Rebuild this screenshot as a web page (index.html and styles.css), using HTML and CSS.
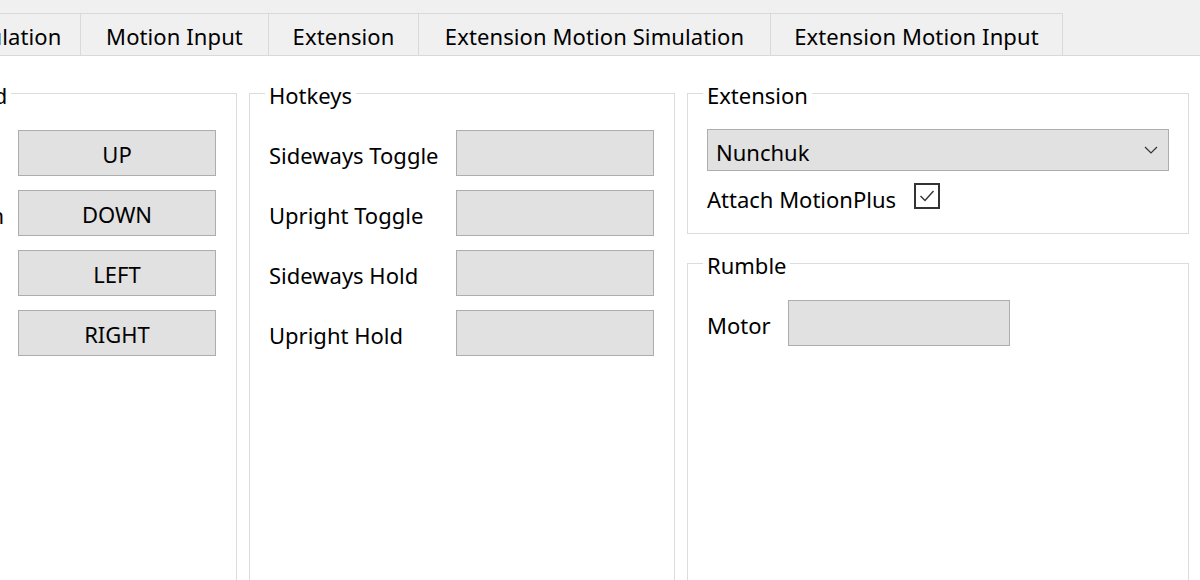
FILE: index.html
```html
<!DOCTYPE html>
<html>
<head>
<meta charset="utf-8">
<link rel="stylesheet" href="styles.css">
</head>
<body>
<div class="tabbar">
  <div class="tab t1">Motion Simulation</div>
  <div class="tab t2">Motion Input</div>
  <div class="tab t3">Extension</div>
  <div class="tab t4">Extension Motion Simulation</div>
  <div class="tab t5">Extension Motion Input</div>
</div>
<div class="content">
  <fieldset class="group g-dpad">
    <legend>D-Pad</legend>
    <div class="form form-dpad">
      <span class="label">Up</span><div class="btn">UP</div>
      <span class="label">Down</span><div class="btn">DOWN</div>
      <span class="label">Left</span><div class="btn">LEFT</div>
      <span class="label">Right</span><div class="btn">RIGHT</div>
    </div>
  </fieldset>
  <fieldset class="group g-hotkeys">
    <legend>Hotkeys</legend>
    <div class="form form-hotkeys">
      <span class="label">Sideways Toggle</span><div class="btn"></div>
      <span class="label">Upright Toggle</span><div class="btn"></div>
      <span class="label">Sideways Hold</span><div class="btn"></div>
      <span class="label">Upright Hold</span><div class="btn"></div>
    </div>
  </fieldset>
  <div class="col">
    <fieldset class="group g-ext">
      <legend>Extension</legend>
      <div class="combo">
        <span>Nunchuk</span>
        <svg class="chev" width="14" height="8" viewBox="0 0 14 8"><path d="M1 1 L7 7 L13 1" fill="none" stroke="#333" stroke-width="1.2"/></svg>
      </div>
      <div class="check-row">
        <span class="check-label">Attach MotionPlus</span>
        <span class="checkbox"><svg width="22" height="22" viewBox="0 0 22 22"><path d="M4.5 11 L9 15.5 L17.5 6" fill="none" stroke="#333" stroke-width="1.4"/></svg></span>
      </div>
    </fieldset>
    <fieldset class="group g-rumble">
      <legend>Rumble</legend>
      <div class="form form-rumble">
        <span class="label">Motor</span><div class="btn"></div>
      </div>
    </fieldset>
  </div>
</div>
</body>
</html>
```
FILE: styles.css
```css
* { box-sizing: border-box; }
html, body { margin: 0; padding: 0; }
body {
  width: 1200px;
  height: 580px;
  overflow: hidden;
  background: #ffffff;
  font-family: "Noto Sans", "Segoe UI", sans-serif;
  font-size: 22px;
  color: #000;
}
.tabbar {
  height: 56px;
  background: #f0f0f0;
  border-bottom: 1px solid #d9d9d9;
  padding-top: 13px;
  display: flex;
  align-items: flex-end;
  overflow: hidden;
}
.tab {
  flex: none;
  height: 42px;
  border-top: 1px solid #d9d9d9;
  border-left: 1px solid #d9d9d9;
  background: #f0f0f0;
  text-align: center;
  padding-top: 3px;
  line-height: 38px;
  white-space: nowrap;
  letter-spacing: 0.1px;
}
.t1 { width: 230px; margin-left: -150px; }
.t2 { width: 188px; }
.t3 { width: 150px; }
.t4 { width: 352px; }
.t5 { width: 293px; border-right: 1px solid #d9d9d9; }

.content {
  display: flex;
  gap: 12px;
  height: 560px;
  padding-top: 22px;
}
.group {
  margin: 0;
  min-width: 0;
  border: 1px solid #dcdcdc;
  padding: 22px 20px 20px 19px;
  flex: none;
}
.group legend {
  padding: 4px 4px 0 4px;
  margin-left: -4px;
  line-height: 26px;
  white-space: nowrap;
}
.g-dpad { width: 312px; margin-left: -75px; }
.g-hotkeys { width: 426px; }
.col {
  width: 502px;
  flex: none;
  display: flex;
  flex-direction: column;
  gap: 14px;
}
.g-ext { padding: 21px 19px 21px 19px; }
.g-rumble { flex: 1; padding-right: 19px; }

.form {
  display: grid;
  row-gap: 14px;
  align-items: center;
}
.form-dpad {
  grid-template-columns: auto 198px;
  column-gap: 14px;
  justify-content: end;
}
.form-hotkeys { grid-template-columns: 187px 198px; }
.form-rumble { grid-template-columns: 81px 222px; }

.label {
  line-height: 30px;
  padding-top: 3px;
  white-space: nowrap;
}
.btn {
  height: 46px;
  background: #e1e1e1;
  border: 1px solid #adadad;
  text-align: center;
  line-height: 30px;
  padding-top: 8px;
}
.combo {
  height: 42px;
  background: #e1e1e1;
  border: 1px solid #adadad;
  display: flex;
  align-items: center;
  justify-content: space-between;
  padding: 3px 10px 0 8px;
  line-height: 30px;
}
.chev { margin-top: -3px; }
.check-row {
  margin-top: 12px;
  display: flex;
  align-items: flex-start;
  gap: 18px;
}
.check-label {
  line-height: 26px;
  padding-top: 3px;
}
.checkbox {
  width: 26px;
  height: 26px;
  border: 2px solid #333;
  display: flex;
  align-items: center;
  justify-content: center;
}
```
